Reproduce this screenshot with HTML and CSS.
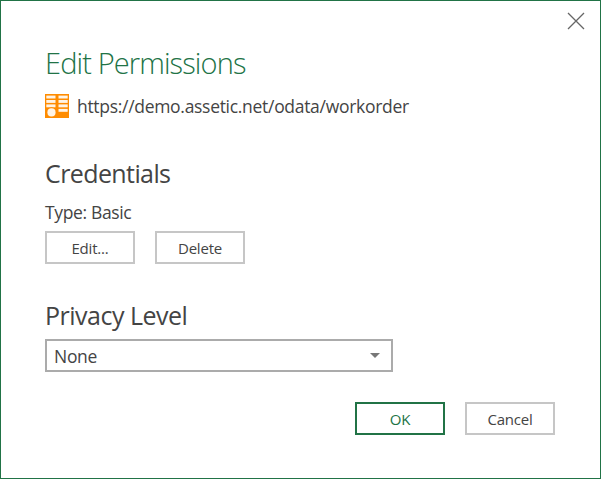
FILE: index.html
```
<!DOCTYPE html>
<html lang="en">
<head>
    <meta charset="UTF-8">
    <title>Edit Permissions</title>
    <link rel="stylesheet" href="styles.css">
</head>
<body>
    <div class="dialog">
        <button class="close" aria-label="Close">
            <svg width="18" height="18" viewBox="0 0 18 18">
                <path d="M1 1 L17 17 M17 1 L1 17" stroke="#666" stroke-width="1.3" fill="none"/>
            </svg>
        </button>

        <h1>Edit Permissions</h1>

        <div class="source">
            <svg width="24" height="24" viewBox="0 0 24 24">
                <rect width="24" height="24" fill="#ff8c00"/>
                <g fill="#fff" fill-opacity="0.9">
                    <rect x="1.3" y="1.6" width="9.2" height="2.9"/>
                    <rect x="1.3" y="6" width="9.2" height="2.9"/>
                    <rect x="1.3" y="10.4" width="9.2" height="2.9"/>
                    <rect x="13.5" y="1.6" width="9.2" height="2.9"/>
                    <rect x="13.5" y="6" width="9.2" height="2.9"/>
                    <rect x="13.5" y="10.4" width="9.2" height="2.9"/>
                    <rect x="13.5" y="14.9" width="9.2" height="2.9"/>
                    <circle cx="6.5" cy="18.4" r="5.2" fill="#ff8c00" fill-opacity="1"/>
                    <circle cx="6.5" cy="18.4" r="4.1"/>
                </g>
            </svg>
            <span class="url">https://demo.assetic.net/odata/workorder</span>
        </div>

        <h2>Credentials</h2>
        <p>Type: Basic</p>
        <div class="buttons">
            <button class="btn">Edit...</button>
            <button class="btn">Delete</button>
        </div>

        <h2 class="privacy">Privacy Level</h2>
        <div class="select">
            <span>None</span>
            <svg width="10" height="5" viewBox="0 0 10 5">
                <path d="M0 0 H10 L5 5 Z" fill="#777"/>
            </svg>
        </div>

        <div class="buttons footer">
            <button class="btn ok">OK</button>
            <button class="btn">Cancel</button>
        </div>
    </div>
</body>
</html>
```
FILE: styles.css
```
* {
    box-sizing: border-box;
}
body {
    margin: 0;
    background-color: #fff;
    color: #444;
    font-family: "Open Sans", "Noto Sans", sans-serif;
}
.dialog {
    position: relative;
    width: 601px;
    height: 479px;
    padding: 42px 45px 0 44px;
    border: 1px solid #217346;
}
.close {
    position: absolute;
    top: 11px;
    right: 15px;
    width: 18px;
    height: 18px;
    padding: 0;
    border: none;
    background: none;
}
svg {
    display: block;
    flex: none;
}
h1, h2, p {
    margin: 0;
    white-space: nowrap;
}
h1 {
    height: 40px;
    line-height: 40px;
    font-size: 29px;
    font-weight: 300;
    letter-spacing: -0.88px;
    color: #217346;
}
.source {
    display: flex;
    align-items: center;
    gap: 8px;
    height: 24px;
    margin-top: 11px;
    font-size: 17.5px;
}
.url {
    letter-spacing: -0.3px;
}
h2 {
    height: 34px;
    margin-top: 38px;
    line-height: 34px;
    font-size: 25px;
    font-weight: 400;
    letter-spacing: -0.6px;
}
p {
    height: 24px;
    margin-top: 10px;
    line-height: 24px;
    font-size: 17.5px;
    letter-spacing: -0.35px;
}
.buttons {
    display: flex;
    gap: 20px;
    margin-top: 7px;
}
.btn {
    width: 90px;
    height: 33px;
    padding: 0;
    border: 2px solid #c6c6c6;
    background-color: #fff;
    color: #444;
    font-family: inherit;
    font-size: 15px;
    letter-spacing: -0.2px;
}
.privacy {
    margin-top: 34px;
    letter-spacing: -0.5px;
}
.select {
    display: flex;
    align-items: center;
    justify-content: space-between;
    width: 348px;
    height: 33px;
    margin-top: 7px;
    padding: 0 11px 0 7px;
    border: 2px solid #ababab;
    font-size: 17.5px;
    letter-spacing: -0.3px;
}
.footer {
    justify-content: flex-end;
    margin-top: 30px;
}
.ok {
    border-color: #217346;
    color: #217346;
}
```
